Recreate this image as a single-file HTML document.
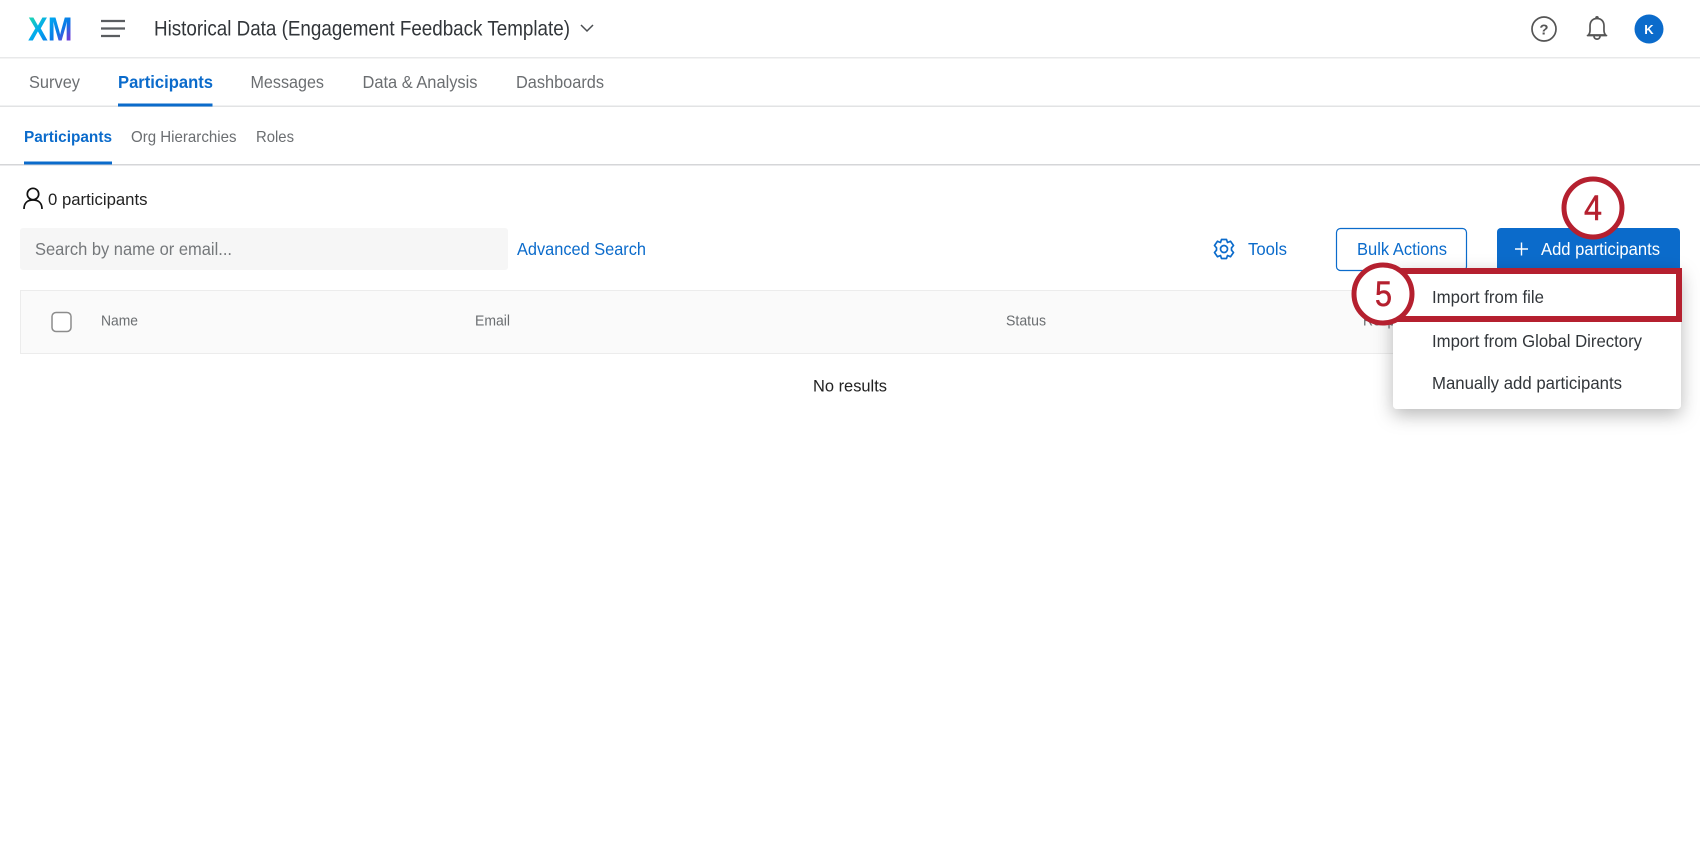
<!DOCTYPE html>
<html lang="en">
<head>
<meta charset="utf-8">
<title>Participants</title>
<style>
html,body{margin:0;padding:0;background:#fff;width:1700px;height:850px;overflow:hidden}
svg{display:block;filter:blur(.3px)}
text{font-family:"Liberation Sans",sans-serif;font-size:16px;fill:#32363a}
.g{fill:#6b6e71}
.b{fill:#0b6bcb}
.w{fill:#fff}
.s{font-weight:bold}
</style>
</head>
<body>
<svg width="1700" height="850" viewBox="0 0 1700 850" xmlns="http://www.w3.org/2000/svg">
<defs>
<linearGradient id="xm" gradientUnits="userSpaceOnUse" x1="28" y1="17" x2="60" y2="47">
<stop offset="0" stop-color="#21dbaa"/><stop offset=".4" stop-color="#00a8f0"/><stop offset=".75" stop-color="#0a78e6"/><stop offset="1" stop-color="#6a3fd8"/>
</linearGradient>
<filter id="sh" x="-20%" y="-20%" width="140%" height="150%"><feDropShadow dx="0" dy="6" stdDeviation="9" flood-color="#000" flood-opacity=".28"/></filter>
</defs>
<rect width="1700" height="850" fill="#fff"/>

<!-- top bar -->
<text x="28" y="40.500" textLength="44.500" lengthAdjust="spacingAndGlyphs" style="font-size:33px;font-weight:bold;fill:url(#xm)">XM</text>
<path d="M101 21H125M101 28.500H125M101 36H120" stroke="#5a5d60" stroke-width="2.200" fill="none"/>
<text x="154" y="35.500" textLength="416" lengthAdjust="spacingAndGlyphs" style="font-size:21px">Historical Data (Engagement Feedback Template)</text>
<path d="M581 25L587 31L593 25" stroke="#4a4d50" stroke-width="1.500" fill="none"/>
<circle cx="1544" cy="29" r="12" fill="none" stroke="#555" stroke-width="1.700"/>
<text x="1544" y="34.500" text-anchor="middle" style="font-size:15px;font-weight:bold;fill:#555">?</text>
<path d="M1588.500 35C1590.500 32.500 1590 30 1590 26C1590 21 1593 18.500 1597 18.500C1601 18.500 1604 21 1604 26C1604 30 1603.500 32.500 1605.500 35ZM1587.500 35.500H1606.500M1594 36.500C1594.300 40 1599.700 40 1600 36.500M1596 18C1596 16.500 1598 16.500 1598 18" stroke="#555" stroke-width="1.700" fill="none" stroke-linejoin="round" stroke-linecap="round"/>
<circle cx="1649" cy="29" r="14.500" fill="#0b6bcb"/>
<text x="1649" y="34" text-anchor="middle" style="font-size:13px;font-weight:bold;fill:#fff">K</text>
<rect x="0" y="57" width="1700" height="1.500" fill="#e8e9ea"/>

<!-- main tabs -->
<text x="29" y="88" textLength="51" lengthAdjust="spacingAndGlyphs" class="g" style="font-size:17.500px">Survey</text>
<text x="118" y="88" textLength="95" lengthAdjust="spacingAndGlyphs" class="b s" style="font-size:17.500px">Participants</text>
<text x="250.500" y="88" textLength="73.500" lengthAdjust="spacingAndGlyphs" class="g" style="font-size:17.500px">Messages</text>
<text x="362.500" y="88" textLength="115" lengthAdjust="spacingAndGlyphs" class="g" style="font-size:17.500px">Data &amp; Analysis</text>
<text x="516" y="88" textLength="88" lengthAdjust="spacingAndGlyphs" class="g" style="font-size:17.500px">Dashboards</text>
<rect x="0" y="105.500" width="1700" height="1.500" fill="#e2e3e4"/>
<rect x="118" y="103.500" width="94.500" height="3" fill="#0b6bcb"/>

<!-- sub tabs -->
<text x="24" y="142" textLength="88" lengthAdjust="spacingAndGlyphs" class="b s" style="font-size:16px">Participants</text>
<text x="131" y="142" textLength="105.500" lengthAdjust="spacingAndGlyphs" class="g" style="font-size:16px">Org Hierarchies</text>
<text x="256" y="142" textLength="38" lengthAdjust="spacingAndGlyphs" class="g" style="font-size:16px">Roles</text>
<rect x="0" y="164" width="1700" height="1.500" fill="#d5d6d8"/>
<rect x="24" y="161.500" width="88" height="3" fill="#0b6bcb"/>

<!-- count -->
<circle cx="33" cy="194" r="5.700" fill="none" stroke="#111" stroke-width="1.700"/>
<path d="M24 209C24 203.500 27 200 33 200C39 200 42 203.500 42 209" fill="none" stroke="#111" stroke-width="1.700"/>
<text x="48" y="205" textLength="99.500" lengthAdjust="spacingAndGlyphs" style="font-size:17px;fill:#222">0 participants</text>

<!-- search row -->
<rect x="20" y="228" width="488" height="42" rx="3" fill="#f6f6f6"/>
<text x="35" y="255" textLength="197" lengthAdjust="spacingAndGlyphs" style="font-size:17.500px;fill:#75787b">Search by name or email...</text>
<text x="517" y="255" textLength="129" lengthAdjust="spacingAndGlyphs" class="b" style="font-size:17.500px">Advanced Search</text>

<path d="M1224 249m-3.500 0a3.500 3.500 0 1 0 7 0a3.500 3.500 0 1 0-7 0" fill="none" stroke="#0b6bcb" stroke-width="1.700"/>
<path d="M1221.500 239.500H1226.500L1227.500 242.500L1230.500 241.300L1233.500 245.500L1231.500 247.800V250.200L1233.500 252.500L1230.500 256.700L1227.500 255.500L1226.500 258.500H1221.500L1220.500 255.500L1217.500 256.700L1214.500 252.500L1216.500 250.200V247.800L1214.500 245.500L1217.500 241.300L1220.500 242.500Z" fill="none" stroke="#0b6bcb" stroke-width="1.700" stroke-linejoin="round"/>
<text x="1248" y="255" textLength="39" lengthAdjust="spacingAndGlyphs" class="b" style="font-size:17.500px">Tools</text>

<rect x="1336.500" y="228.500" width="130" height="42" rx="4" fill="#fff" stroke="#0b6bcb" stroke-width="1.200"/>
<text x="1357" y="255" textLength="90" lengthAdjust="spacingAndGlyphs" class="b" style="font-size:17.500px">Bulk Actions</text>

<rect x="1497" y="228" width="183" height="46" rx="4" fill="#0b6bcb"/>
<path d="M1515 249H1528M1521.500 242.500V255.500" stroke="#fff" stroke-width="1.400" fill="none"/>
<text x="1541" y="255" textLength="119" lengthAdjust="spacingAndGlyphs" class="w" style="font-size:17.500px">Add participants</text>

<!-- table -->
<rect x="20.500" y="290.500" width="1660" height="63" fill="#fafafa" stroke="#ececec"/>
<rect x="52" y="312.500" width="19" height="19" rx="4" fill="#fff" stroke="#8c8c8c" stroke-width="1.500"/>
<text x="101" y="325.500" textLength="37" lengthAdjust="spacingAndGlyphs" class="g" style="font-size:15px">Name</text>
<text x="475" y="325.500" textLength="35" lengthAdjust="spacingAndGlyphs" class="g" style="font-size:15px">Email</text>
<text x="1006" y="325.500" textLength="40" lengthAdjust="spacingAndGlyphs" class="g" style="font-size:15px">Status</text>
<text x="1363" y="325.500" textLength="62" lengthAdjust="spacingAndGlyphs" class="g" style="font-size:15px">Response</text>
<text x="813" y="391.500" textLength="74" lengthAdjust="spacingAndGlyphs" style="font-size:16.500px;fill:#222">No results</text>

<!-- dropdown -->
<rect x="1393" y="268" width="288" height="141" rx="4" fill="#fff" filter="url(#sh)"/>
<text x="1432" y="303" textLength="112" lengthAdjust="spacingAndGlyphs" style="font-size:17.500px">Import from file</text>
<text x="1432" y="347" textLength="210" lengthAdjust="spacingAndGlyphs" style="font-size:17.500px">Import from Global Directory</text>
<text x="1432" y="389" textLength="190" lengthAdjust="spacingAndGlyphs" style="font-size:17.500px">Manually add participants</text>

<!-- callouts -->
<rect x="1385" y="271" width="294" height="48" fill="none" stroke="#b5202f" stroke-width="6"/>
<circle cx="1593" cy="208" r="29" fill="#fff" stroke="#b5202f" stroke-width="5"/>
<text x="1584" y="220" textLength="18" lengthAdjust="spacingAndGlyphs" style="font-size:35px;fill:#b5202f;stroke:#b5202f;stroke-width:.5">4</text>
<circle cx="1383" cy="294" r="29" fill="#fff" stroke="#b5202f" stroke-width="5"/>
<text x="1375" y="306" textLength="17" lengthAdjust="spacingAndGlyphs" style="font-size:35px;fill:#b5202f;stroke:#b5202f;stroke-width:.5">5</text>
</svg>
</body>
</html>
